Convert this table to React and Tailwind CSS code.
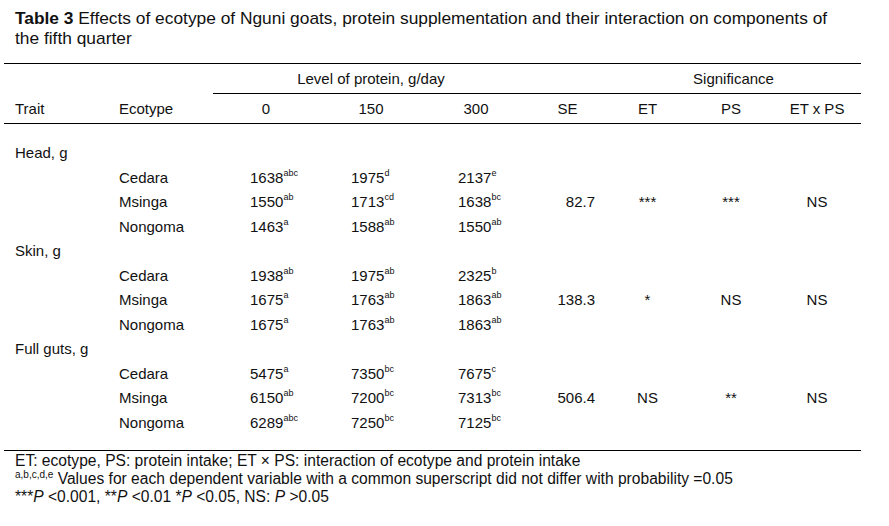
import React from 'react';

const groups = [
  {
    trait: 'Head, g',
    rows: [
      ['Cedara', ['1638', 'abc'], ['1975', 'd'], ['2137', 'e']],
      ['Msinga', ['1550', 'ab'], ['1713', 'cd'], ['1638', 'bc']],
      ['Nongoma', ['1463', 'a'], ['1588', 'ab'], ['1550', 'ab']],
    ],
    se: '82.7', et: '***', ps: '***', x: 'NS',
  },
  {
    trait: 'Skin, g',
    rows: [
      ['Cedara', ['1938', 'ab'], ['1975', 'ab'], ['2325', 'b']],
      ['Msinga', ['1675', 'a'], ['1763', 'ab'], ['1863', 'ab']],
      ['Nongoma', ['1675', 'a'], ['1763', 'ab'], ['1863', 'ab']],
    ],
    se: '138.3', et: '*', ps: 'NS', x: 'NS',
  },
  {
    trait: 'Full guts, g',
    rows: [
      ['Cedara', ['5475', 'a'], ['7350', 'bc'], ['7675', 'c']],
      ['Msinga', ['6150', 'ab'], ['7200', 'bc'], ['7313', 'bc']],
      ['Nongoma', ['6289', 'abc'], ['7250', 'bc'], ['7125', 'bc']],
    ],
    se: '506.4', et: 'NS', ps: '**', x: 'NS',
  },
];

const Val = ({ v }) => (
  <span className="whitespace-nowrap">
    {v[0]}
    <sup className="text-[9px] -top-[7px]">{v[1]}</sup>
  </span>
);

export default function App() {
  return (
    <div
      className="bg-white text-[#111] w-[889px] h-[526px] overflow-hidden text-[15px]"
      style={{ fontFamily: '"Liberation Sans", Arial, sans-serif' }}
    >
      <p className="pl-[15px] pt-[8px] text-[17.35px] leading-[20px] whitespace-nowrap">
        <b>Table 3</b> Effects of ecotype of Nguni goats, protein supplementation and their interaction on components of
        <br />
        the fifth quarter
      </p>

      <table className="ml-[4px] mt-[15px] table-fixed border-collapse w-[857px] leading-[17px]">
        <colgroup>
          <col className="w-[106px]" />
          <col className="w-[103px]" />
          <col className="w-[106px]" />
          <col className="w-[104px]" />
          <col className="w-[106px]" />
          <col className="w-[77px]" />
          <col className="w-[83px]" />
          <col className="w-[84px]" />
          <col className="w-[88px]" />
        </colgroup>
        <thead>
          <tr className="h-[30px] border-t border-black">
            <th colSpan={2} />
            <th colSpan={3} className="font-normal text-center border-b border-black">
              Level of protein, g/day
            </th>
            <th className="border-b border-black" />
            <th colSpan={3} className="font-normal text-center border-b border-black">
              Significance
            </th>
          </tr>
          <tr className="h-[30px] border-b border-black">
            <th className="font-normal text-left pl-[11px]">Trait</th>
            <th className="font-normal text-left pl-[9px]">Ecotype</th>
            <th className="font-normal text-center">0</th>
            <th className="font-normal text-center">150</th>
            <th className="font-normal text-center">300</th>
            <th className="font-normal text-center">SE</th>
            <th className="font-normal text-center">ET</th>
            <th className="font-normal text-center">PS</th>
            <th className="font-normal text-center">ET x PS</th>
          </tr>
        </thead>
        <tbody>
          <tr className="h-[17px]">
            <td colSpan={9} />
          </tr>
          {groups.map((g) => (
            <React.Fragment key={g.trait}>
              <tr className="h-[24.5px]">
                <td colSpan={9} className="pl-[11px] whitespace-nowrap">{g.trait}</td>
              </tr>
              {g.rows.map((r, i) => (
                <tr key={r[0]} className="h-[24.5px]">
                  <td />
                  <td className="pl-[9px]">{r[0]}</td>
                  <td className="pl-[37px]"><Val v={r[1]} /></td>
                  <td className="pl-[32px]"><Val v={r[2]} /></td>
                  <td className="pl-[35px]"><Val v={r[3]} /></td>
                  <td className="text-right pr-[11px]">{i === 1 ? g.se : ''}</td>
                  <td className="text-center">{i === 1 ? g.et : ''}</td>
                  <td className="text-center">{i === 1 ? g.ps : ''}</td>
                  <td className="text-center">{i === 1 ? g.x : ''}</td>
                </tr>
              ))}
            </React.Fragment>
          ))}
          <tr className="h-[16px] border-b border-black">
            <td colSpan={9} />
          </tr>
        </tbody>
      </table>

      <div className="pl-[15px] pt-[1px] text-[15.6px] leading-[18px]">
        <p>ET: ecotype, PS: protein intake; ET × PS: interaction of ecotype and protein intake</p>
        <p>
          <sup className="text-[10px] -top-[6px]">a,b,c,d,e</sup> Values for each dependent variable with a common superscript did not differ with probability =0.05
        </p>
        <p>
          ***<i>P</i> &lt;0.001, **<i>P</i> &lt;0.01 *<i>P</i> &lt;0.05, NS: <i>P</i> &gt;0.05
        </p>
      </div>
    </div>
  );
}
